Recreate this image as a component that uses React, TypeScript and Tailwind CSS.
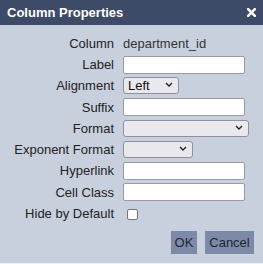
import { ReactNode } from 'react'

const font = { fontFamily: '"Liberation Sans", Arial, sans-serif' }

function Row({ label, children }: { label: string; children: ReactNode }) {
  return (
    <div className="flex items-center h-[21.25px]">
      <div className="w-[114px] shrink-0 text-right text-[#222]">{label}</div>
      <div className="pl-[9px] flex items-center">{children}</div>
    </div>
  )
}

function TextBox() {
  return (
    <input
      type="text"
      className="w-[122px] h-[18px] bg-white border border-[#9a9aa0] rounded-[2px] px-1 text-[13px] outline-none"
    />
  )
}

function Select({ width, value }: { width: number; value?: string }) {
  return (
    <div className="relative" style={{ width }}>
      <select
        className="w-full h-[17px] appearance-none bg-[#e9e9ed] border border-[#8f8f9d] rounded-[3px] pl-[4px] text-[13px] leading-[15px] text-[#111] outline-none"
        defaultValue={value ?? ''}
      >
        <option value={value ?? ''}>{value ?? ''}</option>
      </select>
      <svg
        width="8"
        height="5"
        viewBox="0 0 8 5"
        className="absolute right-[6px] top-[6px] pointer-events-none"
      >
        <path d="M1 1l3 3 3-3" fill="none" stroke="#222" strokeWidth="1.4" />
      </svg>
    </div>
  )
}

export default function App() {
  return (
    <div className="w-[263px] h-[264px] bg-[#c8d0dd] flex flex-col text-[13px] border-b border-[#eef1f5]" style={font}>
      {/* Title bar */}
      <div className="h-[25px] bg-[#3d4a68] flex items-center justify-between pl-[7px] pr-[7px] shrink-0">
        <span className="text-white font-bold text-[13px]">Column Properties</span>
        <svg width="9" height="9" viewBox="0 0 9 9">
          <path d="M1.2 1.2l6.6 6.6M7.8 1.2l-6.6 6.6" stroke="#fff" strokeWidth="2.6" strokeLinecap="square" />
        </svg>
      </div>

      {/* Fields */}
      <div className="flex flex-col pt-[8px]">
        <Row label="Column">
          <span className="text-[#333]">department_id</span>
        </Row>
        <Row label="Label"><TextBox /></Row>
        <Row label="Alignment"><Select width={56} value="Left" /></Row>
        <Row label="Suffix"><TextBox /></Row>
        <Row label="Format"><Select width={126} /></Row>
        <Row label="Exponent Format"><Select width={70} /></Row>
        <Row label="Hyperlink"><TextBox /></Row>
        <Row label="Cell Class"><TextBox /></Row>
        <Row label="Hide by Default">
          <span className="ml-[4px] mt-[2px] w-[11px] h-[11px] bg-white border border-[#767676] rounded-[2px]" />
        </Row>
      </div>

      {/* Buttons */}
      <div className="flex justify-end gap-[8px] pr-[9px] mt-[7px]">
        <button className="h-[23px] w-[26px] bg-[#7d8aa7] text-[#1e2636] text-[13px]">OK</button>
        <button className="h-[23px] w-[49px] bg-[#7d8aa7] text-[#1e2636] text-[13px]">Cancel</button>
      </div>
    </div>
  )
}
